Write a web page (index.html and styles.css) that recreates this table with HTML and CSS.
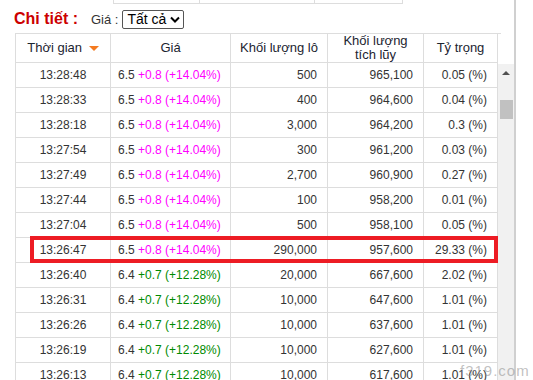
FILE: index.html
```html
<!DOCTYPE html>
<html>
<head>
	<title>Chi tiết khớp lệnh</title>
	<meta charset="UTF-8">
	<link rel="stylesheet" href="styles.css">
</head>
<body>
	<div class="page">
		<div class="prev">
			<div class="prev-cell w1"></div>
			<div class="prev-cell w2"></div>
			<div class="prev-cell w3"></div>
		</div>

		<div class="title-row">
			<span class="title">Chi tiết :</span>
			<span class="filter-label">Giá :</span>
			<span class="select"><span>Tất cả</span>
				<svg width="10" height="7" viewBox="0 0 10 7"><path d="M1 1.5 L5 5.5 L9 1.5" fill="none" stroke="#000" stroke-width="2"/></svg>
			</span>
		</div>

		<div class="board">
			<div class="grid">
				<table class="trades">
					<colgroup>
						<col style="width:95px">
						<col style="width:120px">
						<col style="width:97px">
						<col style="width:96px">
						<col style="width:74px">
					</colgroup>
					<thead>
						<tr>
							<th>Thời gian <span class="sort"></span></th>
							<th>Giá</th>
							<th>Khối lượng lô</th>
							<th>Khối lượng<br>tích lũy</th>
							<th>Tỷ trọng</th>
						</tr>
					</thead>
					<tbody>
						<tr><td class="time">13:28:48</td><td>6.5 <span class="up">+0.8 (+14.04%)</span></td><td class="num">500</td><td class="num">965,100</td><td class="num">0.05 (%)</td></tr>
						<tr><td class="time">13:28:33</td><td>6.5 <span class="up">+0.8 (+14.04%)</span></td><td class="num">400</td><td class="num">964,600</td><td class="num">0.04 (%)</td></tr>
						<tr><td class="time">13:28:18</td><td>6.5 <span class="up">+0.8 (+14.04%)</span></td><td class="num">3,000</td><td class="num">964,200</td><td class="num">0.3 (%)</td></tr>
						<tr><td class="time">13:27:54</td><td>6.5 <span class="up">+0.8 (+14.04%)</span></td><td class="num">300</td><td class="num">961,200</td><td class="num">0.03 (%)</td></tr>
						<tr><td class="time">13:27:49</td><td>6.5 <span class="up">+0.8 (+14.04%)</span></td><td class="num">2,700</td><td class="num">960,900</td><td class="num">0.27 (%)</td></tr>
						<tr><td class="time">13:27:44</td><td>6.5 <span class="up">+0.8 (+14.04%)</span></td><td class="num">100</td><td class="num">958,200</td><td class="num">0.01 (%)</td></tr>
						<tr><td class="time">13:27:04</td><td>6.5 <span class="up">+0.8 (+14.04%)</span></td><td class="num">500</td><td class="num">958,100</td><td class="num">0.05 (%)</td></tr>
						<tr><td class="time">13:26:47</td><td>6.5 <span class="up">+0.8 (+14.04%)</span></td><td class="num">290,000</td><td class="num">957,600</td><td class="num">29.33 (%)</td></tr>
						<tr><td class="time">13:26:40</td><td>6.4 <span class="gain">+0.7 (+12.28%)</span></td><td class="num">20,000</td><td class="num">667,600</td><td class="num">2.02 (%)</td></tr>
						<tr><td class="time">13:26:31</td><td>6.4 <span class="gain">+0.7 (+12.28%)</span></td><td class="num">10,000</td><td class="num">647,600</td><td class="num">1.01 (%)</td></tr>
						<tr><td class="time">13:26:26</td><td>6.4 <span class="gain">+0.7 (+12.28%)</span></td><td class="num">10,000</td><td class="num">637,600</td><td class="num">1.01 (%)</td></tr>
						<tr><td class="time">13:26:19</td><td>6.4 <span class="gain">+0.7 (+12.28%)</span></td><td class="num">10,000</td><td class="num">627,600</td><td class="num">1.01 (%)</td></tr>
						<tr><td class="time">13:26:13</td><td>6.4 <span class="gain">+0.7 (+12.28%)</span></td><td class="num">10,000</td><td class="num">617,600</td><td class="num">1.01 (%)</td></tr>
					</tbody>
				</table>
				<div class="scrollbar">
					<div class="scroll-head"></div>
					<div class="track">
						<span class="arrow"></span>
						<span class="thumb"></span>
					</div>
				</div>
			</div>
			<div class="mark"></div>
		</div>
	</div>
	<div class="watermark">f319.com</div>
</body>
</html>
```

FILE: styles.css
```css
body {
	margin: 0;
	padding: 0;
	background-color: #fff;
	color: #333;
	font-family: "Liberation Sans", Arial, sans-serif;
	overflow: hidden;
}

.page {
	width: 514px;
	height: 380px;
	border-right: 2px solid #d0d0d0;
	overflow: hidden;
}

.prev {
	display: flex;
	margin-left: 113px;
	height: 3px;
	width: 290px;
	border-bottom: 1px solid #ddd;
}

.prev-cell {
	border-left: 1px solid #ddd;
	height: 3px;
}

.prev-cell.w1 { width: 85px; }
.prev-cell.w2 { width: 115px; }
.prev-cell.w3 { width: 87px; border-right: 1px solid #ddd; }

.title-row {
	display: flex;
	align-items: center;
	height: 20px;
	padding: 5px 0 0 14px;
}

.title {
	color: #cc0000;
	font-weight: bold;
	font-size: 16px;
	margin-right: 13px;
}

.filter-label {
	font-size: 13px;
	color: #333;
	margin-right: 4px;
}

.select {
	display: flex;
	align-items: center;
	justify-content: space-between;
	box-sizing: border-box;
	height: 19px;
	width: 62px;
	padding: 0 3px 0 4px;
	border: 1px solid #555;
	border-radius: 2px;
	font-size: 14px;
	color: #000;
	white-space: nowrap;
}

.board {
	position: relative;
	margin-top: 4px;
}

.grid {
	display: flex;
	margin-left: 15px;
}

.trades {
	border-collapse: collapse;
	table-layout: fixed;
	width: 482px;
}

.trades th,
.trades td {
	border: 1px solid #ddd;
	padding: 0 10px;
	white-space: nowrap;
	overflow: hidden;
}

.trades th {
	height: 28px;
	font-weight: normal;
	font-size: 13px;
	line-height: 14px;
	color: #1b2430;
	text-align: center;
	padding: 0 4px;
}

.trades td {
	height: 24px;
	font-size: 12px;
	color: #333;
	padding: 0 7px;
}

.trades td.time {
	text-align: center;
}

.trades td.num {
	text-align: right;
	padding-right: 10px;
}

.sort {
	display: inline-block;
	width: 0;
	height: 0;
	margin-left: 3px;
	border-left: 5px solid transparent;
	border-right: 5px solid transparent;
	border-top: 5px solid #f47a20;
	vertical-align: middle;
}

.up {
	color: #ff00ff;
}

.gain {
	color: #008a00;
}

.scrollbar {
	width: 17px;
	display: flex;
	flex-direction: column;
}

.scroll-head {
	height: 30px;
	border-top: 1px solid #ddd;
	width: 3px;
}

.track {
	flex: 1;
	background-color: #f1f1f1;
	display: flex;
	flex-direction: column;
	align-items: center;
}

.arrow {
	width: 0;
	height: 0;
	margin-top: 7px;
	border-left: 4px solid transparent;
	border-right: 4px solid transparent;
	border-bottom: 4px solid #505050;
}

.thumb {
	margin-top: 25px;
	width: 13px;
	height: 19px;
	background-color: #c1c1c1;
}

.mark {
	position: absolute;
	left: 30px;
	top: 203px;
	width: 468px;
	height: 27px;
	box-sizing: border-box;
	border: 4px solid #ed1c24;
}

.watermark {
	position: absolute;
	left: 460px;
	top: 362px;
	font-size: 15px;
	letter-spacing: 1px;
	color: rgba(140, 140, 140, 0.55);
}
```
